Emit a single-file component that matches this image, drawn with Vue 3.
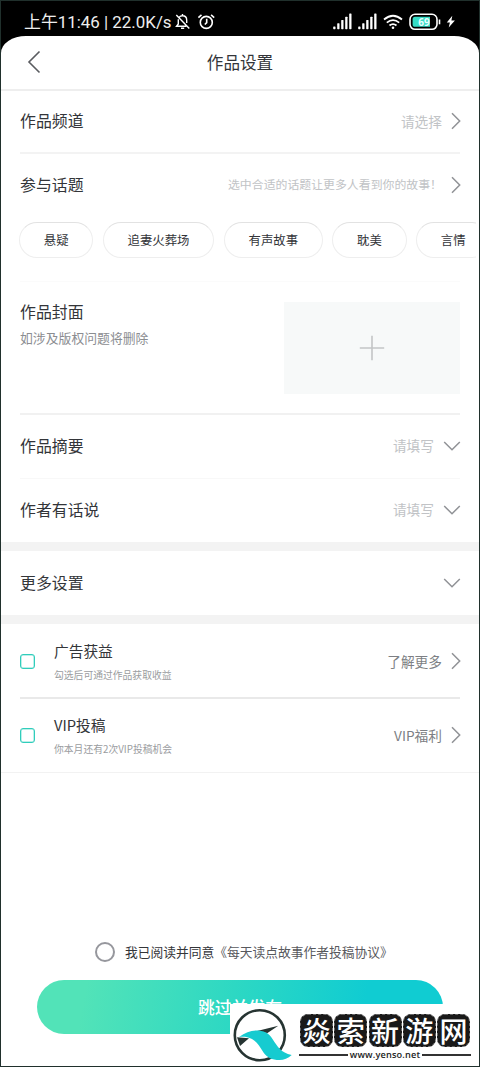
<script setup>
const topics = [
  { name: '悬疑', size: 'short' },
  { name: '追妻火葬场', size: 'long' },
  { name: '有声故事', size: 'medium' },
  { name: '耽美', size: 'short' },
  { name: '言情', size: 'short' },
]
const fields = [
  { label: '作品摘要', cls: 'summary' },
  { label: '作者有话说', cls: 'words' },
]
const options = [
  { title: '广告获益', note: '勾选后可通过作品获取收益', link: '了解更多' },
  { title: 'VIP投稿', note: '你本月还有2次VIP投稿机会', link: 'VIP福利' },
]
const bars = [0, 1, 2, 3, 4]
const seals = ['焱', '索', '新', '游', '网']
</script>

<template>
  <div class="phone">
    <header class="status">
      <span class="clock">上午11:46 | 22.0K/s</span>
      <svg class="bell" width="16" height="18" viewBox="0 0 16 18" fill="none" stroke="#fff" stroke-width="1.4">
        <path d="M4.2 4.2C5 3.2 6 2.8 7.5 2.8c2.6 0 4.2 1.8 4.2 4.4v2.7M3.3 6.2v4.7L1.5 13.3h9.8M6 15.3h3.2M7.5 1v2M1.3 2l13 13.5" />
      </svg>
      <svg class="alarm" width="19" height="18" viewBox="0 0 19 18" fill="none" stroke="#fff" stroke-width="1.6">
        <circle cx="9.3" cy="9.4" r="6" /><path d="M9.7 5.8v3.8L7.8 11.5M1.4 4.6 4.5 1.9M14.1 1.9l3.1 2.7" />
      </svg>
      <span class="grow"></span>
      <svg v-for="n in 2" :key="n" class="signal" width="20" height="17" viewBox="0 0 20 17" fill="#fff">
        <rect v-for="b in bars" :key="b" :x="b * 4 + 0.2" :y="13.5 - b * 3.25" width="2.3" :height="2.7 + b * 3.25" rx=".6" />
      </svg>
      <svg class="wifi" width="20" height="16" viewBox="0 0 20 16" fill="none" stroke="#fff" stroke-width="1.8">
        <path d="M1 5.5Q10-2 19 5.5M3.8 8.6q6.2-5 12.4 0M6.5 11.5q3.5-2.8 7 0" /><circle cx="10" cy="13.8" r="1.3" fill="#fff" stroke="none" />
      </svg>
      <svg class="battery" width="33" height="18" viewBox="0 0 33 18">
        <rect x="1" y="1.3" width="27" height="15" rx="5" fill="none" stroke="#fff" stroke-width="1.6" />
        <path d="M6 3.8h15v10H6q-2.4 0-2.4-2.6V6.4q0-2.6 2.4-2.6" fill="#35dcc5" />
        <path d="M30.5 6.5v4.8" stroke="#fff" stroke-width="1.6" />
        <text x="15" y="12.5" text-anchor="middle" class="charge">69</text>
      </svg>
      <svg class="bolt" width="10" height="14" viewBox="0 0 10 14" fill="#fff"><path d="M6.3.8.8 7.6h3.1L2.7 12.6 8.9 5.6H5.4z" /></svg>
    </header>

    <main class="sheet">
      <div class="bar">
        <svg class="back" width="14" height="24" viewBox="0 0 14 24" fill="none" stroke="#5a5c60" stroke-width="1.6"><path d="M12.5 1.5 2 12l10.5 10.5" /></svg>
        <h1>作品设置</h1>
      </div>

      <section class="row channel">
        <span class="label">作品频道</span><span class="hint">请选择</span>
        <svg class="right" width="10" height="18" viewBox="0 0 10 18"><path d="m1 1.3 7.7 7.7L1 16.7" /></svg>
      </section>

      <section class="topics">
        <div class="row topic">
          <span class="label">参与话题</span><span class="hint tiny">选中合适的话题让更多人看到你的故事！</span>
          <svg class="right" width="10" height="18" viewBox="0 0 10 18"><path d="m1 1.3 7.7 7.7L1 16.7" /></svg>
        </div>
        <div class="chips">
          <span v-for="t in topics" :key="t.name" class="chip" :class="t.size">{{ t.name }}</span>
        </div>
      </section>

      <section class="cover">
        <div class="cover-text"><div class="label">作品封面</div><p>如涉及版权问题将删除</p></div>
        <div class="upload">
          <svg width="26" height="26" viewBox="0 0 26 26" stroke="#c3c5c6" stroke-width="1.6"><path d="M13 .8v24.4M.8 13h24.4" /></svg>
        </div>
      </section>

      <section v-for="f in fields" :key="f.label" class="row" :class="f.cls">
        <span class="label">{{ f.label }}</span><span class="hint">请填写</span>
        <svg class="down" width="18" height="10" viewBox="0 0 18 10"><path d="m1.2 1 7.8 7.8L16.8 1" /></svg>
      </section>

      <section class="row more">
        <span class="label">更多设置</span>
        <svg class="down" width="18" height="10" viewBox="0 0 18 10"><path d="m1.2 1 7.8 7.8L16.8 1" /></svg>
      </section>

      <section class="options">
        <div v-for="o in options" :key="o.title" class="option">
          <i class="check"></i>
          <div class="copy"><h2>{{ o.title }}</h2><p>{{ o.note }}</p></div>
          <span class="link">{{ o.link }}</span>
          <svg class="right" width="10" height="18" viewBox="0 0 10 18"><path d="m1 1.3 7.7 7.7L1 16.7" /></svg>
        </div>
      </section>

      <div class="agree"><i class="radio"></i><span>我已阅读并同意<b>《每天读点故事作者投稿协议》</b></span></div>
      <button class="submit">跳过并发布</button>
    </main>

    <aside class="brand">
      <svg class="logo" width="60" height="56" viewBox="0 0 60 56">
        <circle cx="26.8" cy="27.2" r="25" fill="none" stroke="#263432" stroke-width="2.6" />
        <path d="M22 23.500 45.300 17.700 34.500 25zM4 29.300l12 1-9 7.800z" fill="#263432" />
        <path d="M6 29C12 25 17 22.600 23 22.600c8 0 12.500 2.400 16.500 8.400C45 39 47.500 44.500 58.700 47 55 50.500 51 52 46.500 52 39 52 34 49.500 30.500 44.500 26.500 38.500 24.500 34 19 31 14 28.500 10 28.500 6 29" fill="#16cbd0" />
      </svg>
      <div class="brand-copy">
        <div class="seals"><span v-for="s in seals" :key="s" class="seal">{{ s }}</span></div>
        <div class="site"><i></i><span>www.yenso.net</span><i></i></div>
      </div>
    </aside>
  </div>
</template>

<style>
body { margin: 0; }
</style>

<style scoped>
* { box-sizing: border-box; }
.phone {
  position: relative; width: 480px; height: 1067px; overflow: hidden; border: 1px solid #20302c; background: #000;
  display: flex; flex-direction: column; color: #333539;
  font-family: "Noto Sans CJK SC", "Noto Sans", sans-serif; white-space: nowrap;
}
svg { flex: none; display: block; }
.status { height: 35px; flex: none; display: flex; align-items: center; padding: 6px 23px 0 23px; }
.clock { width: 149px; color: #eee; font-family: Roboto, "Noto Sans CJK SC", sans-serif; font-size: 16.9px; line-height: 24px; }
.bell { margin-left: 2px; }
.alarm { margin-left: 6px; }
.grow { flex: 1; }
.signal { margin-right: 5px; }
.signal + .signal { margin-right: 5px; }
.wifi { margin-right: 6px; }
.battery { margin-right: 4px; }
.charge { font: bold 10px "Noto Sans", sans-serif; fill: #eaffff; }
.sheet { flex: 1; min-height: 0; background: #fff; border-radius: 25px 25px 0 0 / 17px 17px 0 0; display: flex; flex-direction: column; }
.bar { height: 55px; flex: none; display: grid; grid-template-columns: 100px 1fr 100px; align-items: center; border-bottom: 2px solid #eee; padding-bottom: 2px; }
.back { margin-left: 26px; }
h1 { margin: 0; text-align: center; font-size: 16.6px; line-height: 24px; font-weight: 400; }
.row { display: flex; align-items: center; flex: none; margin: 0 19px; }
.row .right, .row .down, .option .right { margin-right: -1px; }
.label { font-size: 15.9px; line-height: 24px; }
.hint { margin-left: auto; color: #c1c3c6; font-size: 13.7px; line-height: 20px; padding-bottom: 1px; }
.tiny { font-size: 11.9px; }
.right { margin-left: 9px; }
.down { margin-left: 9px; }
.right path, .down path { fill: none; stroke: #909296; stroke-width: 1.5; }
.channel { height: 63px; border-bottom: 2px solid #f3f3f3; padding-bottom: 1px; }
.topics { flex: none; height: 127px; }
.topic { height: 62px; padding-bottom: 1px; }
.chips { margin: 6px 3px 0 18px; display: flex; gap: 9.5px; overflow: hidden; }
.chip {
  flex: none; height: 36px; border: 1px solid #eee; border-top-color: #e2e2e2; border-radius: 18px;
  font-size: 12.4px; line-height: 34px; text-align: center;
}
.short { width: 74.3px; }
.medium { width: 99px; }
.long { width: 111.5px; }
.cover { flex: none; height: 134px; margin: 0 19px; border-top: 1px solid #fbfbfb; border-bottom: 2px solid #f1f1f1; display: flex; justify-content: space-between; padding-top: 20px; }
.cover-text { margin-top: -2px; }
.cover p { margin: 4px 0 0; font-size: 12.85px; line-height: 20px; color: #8b8d91; }
.upload { width: 176px; height: 92px; background: #f7f9f9; display: grid; place-items: center; }
.summary { height: 64px; border-bottom: 1px solid #f8f8f8; padding-bottom: 2px; }
.words { height: 63px; padding-bottom: 2px; }
.more { height: 82px; margin: 0; padding: 0 19px; border-top: 9px solid #f3f3f3; border-bottom: 9px solid #f3f3f3; }
.more .down { margin-left: auto; }
.options { flex: none; border-bottom: 1px solid #f2f2f2; padding: 0 19px; height: 149px; }
.option { height: 74px; display: flex; align-items: center; padding-bottom: 2px; }
.option:first-child { height: 75px; border-bottom: 2px solid #e9e9e9; padding: 1px 0 0; }
.check { width: 15px; height: 15px; border: 1.5px solid #30cdbb; border-radius: 3px; flex: none; box-shadow: inset 0 0 0 .5px #7be0d4; }
.copy { margin-left: 19px; }
h2 { margin: 0; font-size: 14.7px; line-height: 22px; font-weight: 400; }
.copy p { margin: 5px 0 0; font-size: 9.8px; line-height: 16px; color: #9a9ca0; }
.link { margin-left: auto; font-size: 13.7px; line-height: 20px; color: #7d7f84; }
.agree { margin: 168px 0 0 94px; display: flex; align-items: center; height: 22px; font-size: 12.75px; line-height: 22px; }
.agree b { font-weight: 400; color: #58595d; }
.radio { width: 20px; height: 20px; border: 2px solid #96979d; border-radius: 50%; margin-right: 10px; }
.submit {
  flex: none; display: block; margin: 17px 0 0 36px; width: 406px; height: 54px; padding: 0; border: 0; border-radius: 27px;
  background: linear-gradient(100deg, #52e3b8 12%, #2dd8c3 48%, #10ccd2 80%);
  color: #fff; font: 500 16.8px/54px "Noto Sans CJK SC", sans-serif;
}
.brand { position: absolute; left: 229px; top: 1003px; width: 250px; height: 63px; background: #fff; display: flex; box-shadow: 1px 1px #fff; }
.logo { margin: 4px 0 0 3px; }
.brand-copy { margin: 10px 0 0 7px; width: 170px; }
.seals { display: flex; justify-content: space-between; }
.seal {
  width: 33px; height: 33px; border: 1px dashed #666; border-radius: 8px; background: #191919; color: #fff;
  font-size: 28px; line-height: 30px; font-weight: 500; display: flex; justify-content: center;
}
.site { display: flex; align-items: center; gap: 2px; height: 14px; margin: 1px -1px 0; }
.site span { font: 600 9.2px/14px "Open Sans", "Noto Sans", sans-serif; letter-spacing: .15px; color: #222; padding-bottom: 1px; }
.site i { flex: 1; height: 2px; background: #333; }
</style>
